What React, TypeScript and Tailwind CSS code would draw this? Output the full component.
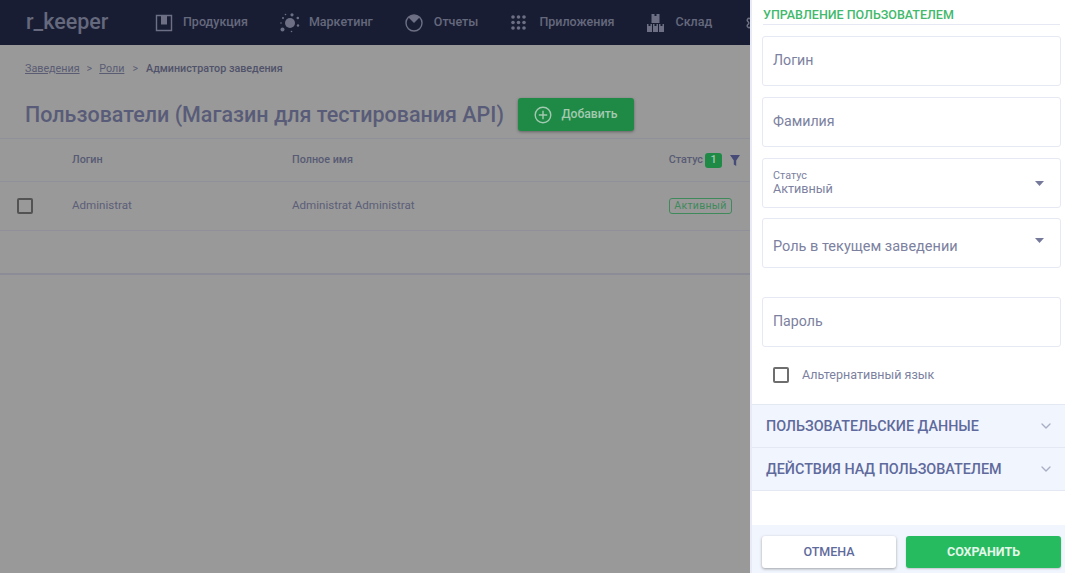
import { ChevronDown, Settings } from 'lucide-react';

const navItems = [
  { label: 'Продукция', icon: <BookIcon />, ml: 'ml-[47px]', gap: 'gap-[10px]' },
  { label: 'Маркетинг', icon: <SunIcon />, ml: 'ml-[32px]', gap: 'gap-[9px]' },
  { label: 'Отчеты', icon: <PieIcon />, ml: 'ml-[32px]', gap: 'gap-[11px]' },
  { label: 'Приложения', icon: <GridIcon />, ml: 'ml-[33px]', gap: 'gap-[13px]' },
  { label: 'Склад', icon: <BoxesIcon />, ml: 'ml-[32px]', gap: 'gap-[12px]' },
];

function BookIcon() {
  return (
    <svg width="18" height="18" viewBox="0 0 18 18" fill="none">
      <path d="M1.5 1.5h15v15h-15z" stroke="#6d7085" strokeWidth="1.4" />
      <path d="M6 1.5h6v9H6z" fill="#6d7085" />
    </svg>
  );
}

function SunIcon() {
  return (
    <svg width="20" height="20" viewBox="0 0 20 20" fill="#6d7085">
      <circle cx="10" cy="10" r="5" />
      <circle cx="2.5" cy="16.5" r="2" />
      <circle cx="12" cy="1.8" r="1.6" />
      <circle cx="17.8" cy="5" r="1.3" />
      <circle cx="18" cy="12.5" r="1.2" />
      <circle cx="3" cy="5" r="1" />
      <circle cx="1" cy="10" r="0.8" />
      <circle cx="5.5" cy="1.5" r="0.8" />
      <circle cx="11.5" cy="18.5" r="0.8" />
    </svg>
  );
}

function PieIcon() {
  return (
    <svg width="18" height="18" viewBox="0 0 18 18" fill="none">
      <circle cx="9" cy="9" r="8" stroke="#6d7085" strokeWidth="1.4" />
      <path d="M3.5 3.5 9 9l5.5-5.5A8 8 0 0 0 3.500 3.500Z" fill="#6d7085" />
    </svg>
  );
}

function GridIcon() {
  const dots = [2, 7.500, 13];
  return (
    <svg width="15" height="15" viewBox="0 0 15 15" fill="#6d7085">
      {dots.map((y) => dots.map((x) => <circle key={`${x}-${y}`} cx={x} cy={y} r="1.8" />))}
    </svg>
  );
}

function BoxesIcon() {
  return (
    <svg width="17" height="18" viewBox="0 0 17 18" fill="#6d7085">
      <path d="M4.500 0h3v2h2V0h3v9h-8zM0 10h5v8H0zM6 10h5v8H6zM12 10h5v8h-5z" />
      <path d="M1.500 10h2v2h-2zM7.500 10h2v2h-2zM13.500 10h2v2h-2z" fill="#191d33" />
    </svg>
  );
}

function TextField({ label, className = '' }: { label: string; className?: string }) {
  return (
    <div className={`h-[50px] flex items-center px-[10px] border border-[#e6e9f3] rounded-[3px] text-[14.200px] text-[#7c81a0] ${className}`}>
      {label}
    </div>
  );
}

function Caret() {
  return (
    <svg width="9" height="5" viewBox="0 0 9 5" fill="#75799a">
      <path d="M0 0h9L4.500 5z" />
    </svg>
  );
}

function AccordionRow({ label }: { label: string }) {
  return (
    <div className="h-[43px] flex items-center justify-between pl-[14px] pr-[11px] bg-[#f1f5fd] border-b border-[#e3e8f3] text-[14.350px] font-medium text-[#5f6a9c]">
      <span className="pt-[2px]">{label}</span>
      <ChevronDown className="w-[16px] h-[16px] text-[#a9aec6]" />
    </div>
  );
}

export default function App() {
  return (
    <div className="flex h-[573px] w-[1065px] overflow-hidden bg-[#999999] font-['Roboto',sans-serif]">
      <div className="w-[750px] shrink-0">
        <header className="h-[45px] bg-[#191d33] flex items-center overflow-hidden pl-[26px] whitespace-nowrap">
          <span className="text-[21.500px] font-medium text-[#65697d] w-[82px] shrink-0">r_keeper</span>
          {navItems.map((item) => (
            <div key={item.label} className={`flex items-center shrink-0 ${item.ml} ${item.gap} text-[12.500px] font-medium text-[#65697d]`}>
              {item.icon}
              <span>{item.label}</span>
            </div>
          ))}
          <Settings className="ml-[33px] w-[18px] h-[18px] shrink-0 text-[#6d7085]" />
        </header>

        <div className="h-[93px] pl-[25px]">
          <div className="pt-[17px] flex items-center text-[10.750px] leading-[14px] text-[#5a5c74]">
            <span className="underline">Заведения</span>
            <span className="mx-[7px]">&gt;</span>
            <span className="underline">Роли</span>
            <span className="mx-[8px]">&gt;</span>
            <span className="font-medium text-[#50526a]">Администратор заведения</span>
          </div>
          <div className="mt-[22px] flex items-center">
            <h1 className="text-[21.500px] leading-[33px] font-medium text-[#595c78] whitespace-nowrap">Пользователи (Магазин для тестирования API)</h1>
            <button className="ml-[14px] w-[116px] h-[33px] flex items-center justify-center gap-[9px] rounded-[3px] bg-[#1e8a46] shadow-[0_1px_3px_rgba(0,0,0,0.35)] text-[12.200px] font-medium text-[#a3c9b0]">
              <svg width="18" height="18" viewBox="0 0 18 18" fill="none" stroke="#a3c9b0" strokeWidth="1.400">
                <circle cx="9" cy="9" r="7.800" />
                <path d="M9 4.800v8.400M4.800 9h8.400" />
              </svg>
              Добавить
            </button>
          </div>
        </div>

        <div className="border-t border-[#8f9099]">
          <div className="h-[43px] flex items-center border-b border-[#8f9099] text-[10.800px] font-medium text-[#585b74]">
            <span className="ml-[72px] w-[220px]">Логин</span>
            <span>Полное имя</span>
            <span className="ml-auto">Статус</span>
            <span className="ml-[2px] w-[17px] h-[15px] rounded-[3px] bg-[#1e8a46] text-[#a3c9b0] flex items-center justify-center">1</span>
            <svg className="ml-[8px] mr-[10px]" width="10" height="11" viewBox="0 0 10 11" fill="#474b78">
              <path d="M0 0h10L6.200 5.500V11L3.800 9.500V5.500z" />
            </svg>
          </div>
          <div className="h-[49px] flex items-center border-b border-[#8f9099] text-[11.600px] text-[#5c5f78]">
            <span className="ml-[17px] w-[16px] h-[16px] border-2 border-[#535353] rounded-[2px]" />
            <span className="ml-[39px] w-[220px]">Administrat</span>
            <span>Administrat Administrat</span>
            <span className="ml-auto mr-[18px] w-[63px] h-[16px] flex items-center justify-center border border-[#3f8a5b] rounded-[3px] text-[#3f8a5b] text-[10.500px] tracking-[0.3px]">Активный</span>
          </div>
          <div className="h-[44px] border-b-2 border-[#8b8c96]" />
        </div>
      </div>

      <aside className="w-[315px] shrink-0 bg-white border-l-2 border-[#e8ebf5] flex flex-col">
        <div className="h-[25px] pt-[7px] border-b border-[#e6e9f3] text-[12.500px] leading-[15px] font-medium text-[#42b96c] ml-[11px] mr-[5px]">
          УПРАВЛЕНИЕ ПОЛЬЗОВАТЕЛЕМ
        </div>

        <div className="ml-[10px] mr-[4px] mt-[11px] flex flex-col">
          <TextField label="Логин" />
          <TextField label="Фамилия" className="mt-[11px]" />
          <div className="mt-[11px] h-[50px] flex items-center justify-between pl-[10px] pr-[16px] border border-[#e6e9f3] rounded-[3px] text-[#7c81a0]">
            <div className="flex flex-col pb-[2px]">
              <span className="text-[10.800px] leading-[13px]">Статус</span>
              <span className="text-[12.600px] leading-[14px]">Активный</span>
            </div>
            <Caret />
          </div>
          <div className="mt-[10px] h-[50px] flex items-center justify-between pl-[10px] pr-[16px] border border-[#e6e9f3] rounded-[3px] text-[14.500px] text-[#7c81a0]">
            <span className="pt-[8px]">Роль в текущем заведении</span>
            <span className="pb-[5px] flex"><Caret /></span>
          </div>
          <TextField label="Пароль" className="mt-[29px]" />
        </div>

        <div className="ml-[21px] mt-[20px] flex items-center h-[16px]">
          <span className="w-[16px] h-[16px] border-2 border-[#6e6e6e] rounded-[2px]" />
          <span className="ml-[13px] text-[12.500px] text-[#7c81a0]">Альтернативный язык</span>
        </div>

        <div className="mt-[21px] border-t border-[#e3e8f3]">
          <AccordionRow label="ПОЛЬЗОВАТЕЛЬСКИЕ ДАННЫЕ" />
          <AccordionRow label="ДЕЙСТВИЯ НАД ПОЛЬЗОВАТЕЛЕМ" />
        </div>

        <div className="mt-auto h-[48px] bg-[#f1f5fd] flex items-start pt-[11px] pl-[10px] pr-[4px] gap-[10px] text-[12.500px] font-bold">
          <button className="w-[134px] h-[32px] rounded-[3px] bg-white shadow-[0_1px_3px_rgba(0,0,0,0.35)] text-[#5f6a9c] font-medium">ОТМЕНА</button>
          <button className="w-[155px] h-[32px] rounded-[3px] bg-[#27bb5f] shadow-[0_1px_2px_rgba(0,0,0,0.2)] text-[#e3f7ea]">СОХРАНИТЬ</button>
        </div>
      </aside>
    </div>
  );
}
